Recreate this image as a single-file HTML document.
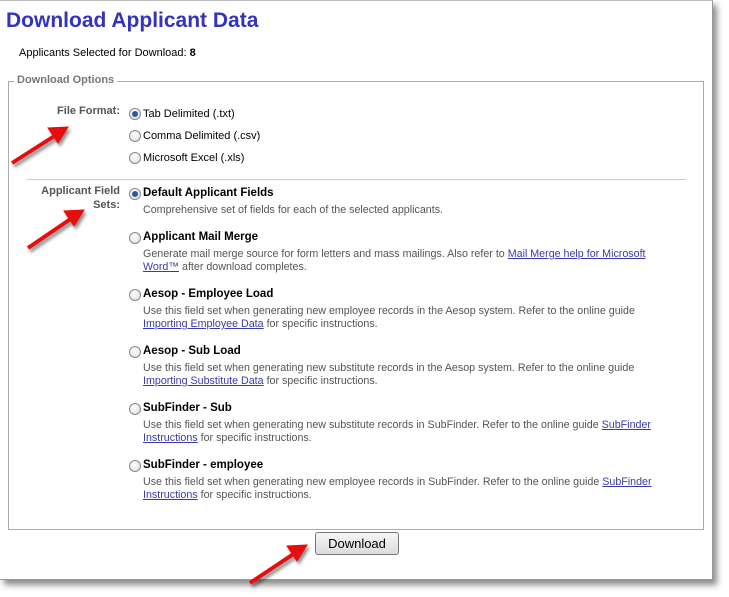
<!DOCTYPE html>
<html><head><style>
body{margin:0;width:729px;height:597px;background:#fff;position:relative;overflow:hidden;font-family:"Liberation Sans",Arial,sans-serif;font-size:11px;color:#000}
#page{position:absolute;left:0;top:0;width:712px;height:578px;background:#fff;border-top:1px solid #bbb;border-right:1px solid #999;border-bottom:1px solid #999;box-shadow:4px 5px 6px rgba(0,0,0,.45)}
.a{position:absolute;white-space:nowrap}
h1{position:absolute;left:6px;top:8px;margin:0;font-size:21px;font-weight:bold;color:#3333bb;font-family:"Liberation Sans",Arial,sans-serif}
#fs{position:absolute;left:8px;top:80px;width:694px;height:447px;border:1px solid #aaa}
.lg{position:absolute;left:14px;top:73px;background:#fff;padding:0 3px;color:#777;font-weight:bold;font-size:11px}
.lbl{position:absolute;color:#555;font-weight:bold;text-align:right}
.r{position:absolute;width:10px;height:10px;border-radius:50%;border:1px solid #888;background:radial-gradient(circle at 40% 35%,#fff,#ddd)}
.r.on::after{content:"";position:absolute;left:2px;top:2px;width:6px;height:6px;border-radius:50%;background:#2a5a99}
.t{font-weight:bold;font-size:11.5px}
.d{color:#555;font-size:10.7px;line-height:13px}
a{color:#3a3aaa;text-decoration:underline}
#btn{position:absolute;left:315px;top:531px;width:82px;height:21px;border:1px solid #777;border-radius:3px;background:linear-gradient(#f6f6f6,#dcdcdc);font-size:13px;text-align:center;line-height:21px}
</style></head><body>
<div id="page">
<h1>Download Applicant Data</h1>
<div class="a" style="left:19px;top:46px">Applicants Selected for Download: <b>8</b></div>
<div id="fs"></div>
<div class="a lg">Download Options</div>
<div class="lbl" style="left:20px;top:104px;width:100px">File Format:</div>
<div class="r on" style="left:129px;top:107px"></div><div class="a" style="left:143px;top:107px">Tab Delimited (.txt)</div>
<div class="r" style="left:129px;top:129px"></div><div class="a" style="left:143px;top:129px">Comma Delimited (.csv)</div>
<div class="r" style="left:129px;top:151px"></div><div class="a" style="left:143px;top:151px">Microsoft Excel (.xls)</div>
<div style="position:absolute;left:27px;top:178px;width:659px;border-top:1px solid #ccc"></div>
<div class="lbl" style="left:20px;top:183px;width:100px;line-height:14px">Applicant Field<br>Sets:</div>

<div class="r on" style="left:129px;top:187px"></div><div class="a t" style="left:143px;top:186px">Default Applicant Fields</div>
<div class="a d" style="left:143px;top:203px">Comprehensive set of fields for each of the selected applicants.</div>

<div class="r" style="left:129px;top:231px"></div><div class="a t" style="left:143px;top:230px">Applicant Mail Merge</div>
<div class="a d" style="left:143px;top:247px">Generate mail merge source for form letters and mass mailings. Also refer to <a>Mail Merge help for Microsoft</a><br><a>Word™</a> after download completes.</div>

<div class="r" style="left:129px;top:288px"></div><div class="a t" style="left:143px;top:287px">Aesop - Employee Load</div>
<div class="a d" style="left:143px;top:304px">Use this field set when generating new employee records in the Aesop system. Refer to the online guide<br><a>Importing Employee Data</a> for specific instructions.</div>

<div class="r" style="left:129px;top:345px"></div><div class="a t" style="left:143px;top:344px">Aesop - Sub Load</div>
<div class="a d" style="left:143px;top:361px">Use this field set when generating new substitute records in the Aesop system. Refer to the online guide<br><a>Importing Substitute Data</a> for specific instructions.</div>

<div class="r" style="left:129px;top:402px"></div><div class="a t" style="left:143px;top:401px">SubFinder - Sub</div>
<div class="a d" style="left:143px;top:418px">Use this field set when generating new substitute records in SubFinder. Refer to the online guide <a>SubFinder</a><br><a>Instructions</a> for specific instructions.</div>

<div class="r" style="left:129px;top:459px"></div><div class="a t" style="left:143px;top:458px">SubFinder - employee</div>
<div class="a d" style="left:143px;top:475px">Use this field set when generating new employee records in SubFinder. Refer to the online guide <a>SubFinder</a><br><a>Instructions</a> for specific instructions.</div>

<div id="btn">Download</div>
</div>
<svg width="729" height="597" style="position:absolute;left:0;top:0">
<defs><filter id="s"><feDropShadow dx="2" dy="3" stdDeviation="1.5" flood-opacity=".45"/></filter></defs>
<g fill="#e8100c" stroke="#e8100c" filter="url(#s)">
<line x1="12" y1="163" x2="56" y2="135" stroke-width="4"/><polygon points="68,127 48,128 58,143" stroke-width="1"/>
<line x1="28" y1="248" x2="72" y2="218" stroke-width="4"/><polygon points="84,210 64,211 74,226" stroke-width="1"/>
<line x1="250" y1="583" x2="295" y2="553" stroke-width="4"/><polygon points="307,545 287,546 297,561" stroke-width="1"/>
</g></svg>
</body></html>
